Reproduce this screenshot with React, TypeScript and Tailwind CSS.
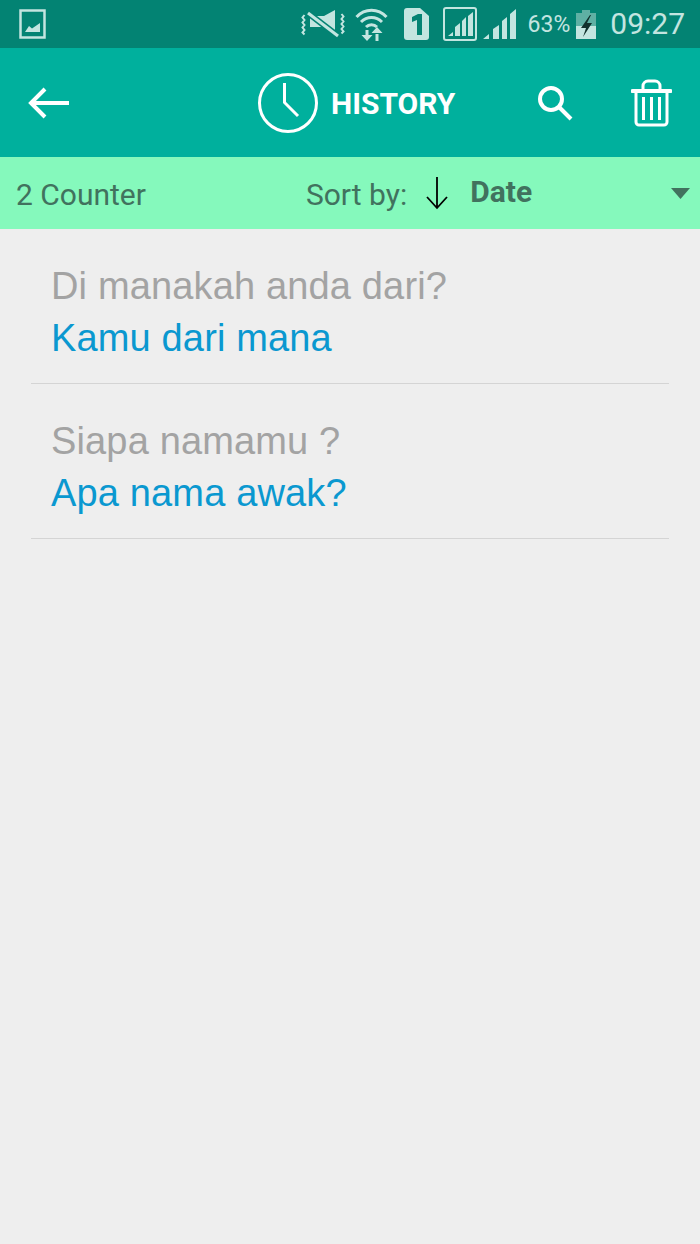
import React from 'react'

const rows = [
  { source: 'Di manakah anda dari?', target: 'Kamu dari mana' },
  { source: 'Siapa namamu ?', target: 'Apa nama awak?' },
]

const StatusBar = () => (
  <div className="h-[48px] bg-[#038373] flex items-center text-[#c3e5e0]">
    <svg className="ml-[19px]" width="28" height="30" viewBox="0 0 28 30" fill="none">
      <rect x="1.5" y="1.5" width="24" height="27" stroke="#c3e5e0" strokeWidth="2.500" />
      <path d="M6 23l4-6 3 2.500 8-5.500v9z" fill="#c3e5e0" />
    </svg>
    <div className="ml-auto flex items-center h-full">
      <svg className="mr-[10px]" width="44" height="30" viewBox="0 0 44 30" fill="none">
        <path d="M3.500 6l-2 2.500 2 2.500-2 2.500 2 2.500-2 2.500 2 2.500-2 2.500 2 2M40.500 5l2 2.500-2 2.500 2 2.500-2 2.500 2 2.500-2 2.500 2 2.500-2 2" stroke="#c3e5e0" strokeWidth="2" />
        <path d="M34 1v23L23 18H9V7h14z" fill="#c3e5e0" />
        <path d="M7 4l30 23" stroke="#038373" strokeWidth="6" />
        <path d="M7 4l30 23" stroke="#c3e5e0" strokeWidth="3" />
      </svg>
      <svg className="mr-[16px]" width="33" height="33" viewBox="0 0 33 33" fill="none">
        <path d="M1.500 9C10 0 23 0 31.500 9M6 14c6-6 15-6 21 0M11 19c3-3 8-3 11 0" stroke="#c3e5e0" strokeWidth="3" />
        <path d="M12 22v6M22 26v7" stroke="#c3e5e0" strokeWidth="3" />
        <path d="M6.500 27h11l-5.500 6zM16.500 25l5.500-6 5.500 6z" fill="#c3e5e0" />
      </svg>
      <svg className="mr-[14px]" width="25" height="32" viewBox="0 0 25 32">
        <path d="M3 0h13l9 8v21a3 3 0 0 1-3 3H3a3 3 0 0 1-3-3V3a3 3 0 0 1 3-3z" fill="#c3e5e0" />
        <path d="M8 9l6-3h4v21h-5V12l-5 2z" fill="#038373" />
      </svg>
      <svg className="mr-[6px]" width="34" height="34" viewBox="0 0 34 34" fill="none">
        <rect x="1" y="1" width="32" height="32" rx="2" stroke="#c3e5e0" strokeWidth="2" />
        <path d="M5 29l5-4v4zM12 29v-9l5-4v13zM19 29V14l4-4v19zM25 29V9l5-4v24z" fill="#c3e5e0" />
      </svg>
      <svg className="mr-[12px]" width="33" height="30" viewBox="0 0 33 30">
        <path d="M0 30l6-5v5zM10 30V20l6-4v14zM19 30V12l5-4v22zM27 30V5l6-5v30z" fill="#c3e5e0" />
      </svg>
      <span className="font-['Roboto'] text-[23px] leading-none mr-[6px]">63%</span>
      <svg className="mr-[14px]" width="20" height="29" viewBox="0 0 20 29">
        <path d="M6 0h8v3h6v13H0V3h6z" fill="#5fb0a4" />
        <path d="M0 16h20v13H0z" fill="#c3e5e0" />
        <path d="M14 5L5 18h5L7 27l9-14h-5l4-8z" fill="#10302c" />
      </svg>
      <span className="font-['Roboto'] text-[30px] leading-none mr-[15px]">09:27</span>
    </div>
  </div>
)

const Header = () => (
  <div className="h-[109px] bg-[#00b09d] flex items-center text-white">
    <svg className="ml-[28px]" width="42" height="32" viewBox="0 0 42 32" fill="none">
      <path d="M41 16H3M17 2L3 16l14 14" stroke="white" strokeWidth="4" />
    </svg>
    <div className="flex items-center ml-[187px]">
      <svg width="62" height="62" viewBox="0 0 62 62" fill="none">
        <circle cx="31" cy="31" r="28.500" stroke="white" strokeWidth="3" />
        <path d="M27.500 11v19.500L41 44" stroke="white" strokeWidth="3" />
      </svg>
      <span className="font-['Roboto'] font-bold text-[30px] ml-[12px] mt-[2px] leading-none">HISTORY</span>
    </div>
    <svg className="ml-auto" width="36" height="36" viewBox="0 0 36 36" fill="none">
      <circle cx="14" cy="14" r="11" stroke="white" strokeWidth="4" />
      <path d="M22 22l12 12" stroke="white" strokeWidth="4" />
    </svg>
    <svg className="ml-[58px] mr-[28px]" width="41" height="48" viewBox="0 0 41 48" fill="none">
      <path d="M1.500 12h38" stroke="white" strokeWidth="4" strokeLinecap="round" />
      <path d="M12 10V7a5 5 0 0 1 5-5h7a5 5 0 0 1 5 5v3" stroke="white" strokeWidth="3" />
      <path d="M5 13v30a3 3 0 0 0 3 3h25a3 3 0 0 0 3-3V13" stroke="white" strokeWidth="3" />
      <path d="M12.500 18v23M20.500 18v23M28.500 18v23" stroke="white" strokeWidth="3" />
    </svg>
  </div>
)

const SortBar = () => (
  <div className="h-[72px] bg-[#85f9bc] flex items-center text-[#41725e] font-['Roboto']">
    <span className="ml-[16px] mt-[3px] text-[30px] leading-none">2 Counter</span>
    <span className="ml-[160px] mt-[3px] text-[30px] leading-none">Sort by:</span>
    <svg className="ml-[18px]" width="24" height="34" viewBox="0 0 24 34" fill="none">
      <path d="M12 1v31M2 21l10 11 10-11" stroke="black" strokeWidth="1.800" />
    </svg>
    <span className="ml-[21px] mb-[2px] text-[30px] font-bold leading-none">Date</span>
    <svg className="ml-auto mr-[10px]" width="19" height="11" viewBox="0 0 19 11">
      <path d="M0 0h19L9.500 11z" fill="#41725e" />
    </svg>
  </div>
)

const App = () => {
  return (
    <div className="w-[700px] h-[1244px] bg-[#eeeeee] overflow-hidden">
      <StatusBar />
      <Header />
      <SortBar />
      <div className="px-[31px]">
        {rows.map((row, index) => (
          <div key={index} className="h-[155px] border-b border-[#d4d4d4] pl-[20px] pt-[31px] font-['Liberation_Sans'] text-[38px] leading-[52px] tracking-[0.15px]">
            <div className="text-[#a3a3a3]">{row.source}</div>
            <div className="text-[#0a98d0]">{row.target}</div>
          </div>
        ))}
      </div>
    </div>
  )
}

export default App
